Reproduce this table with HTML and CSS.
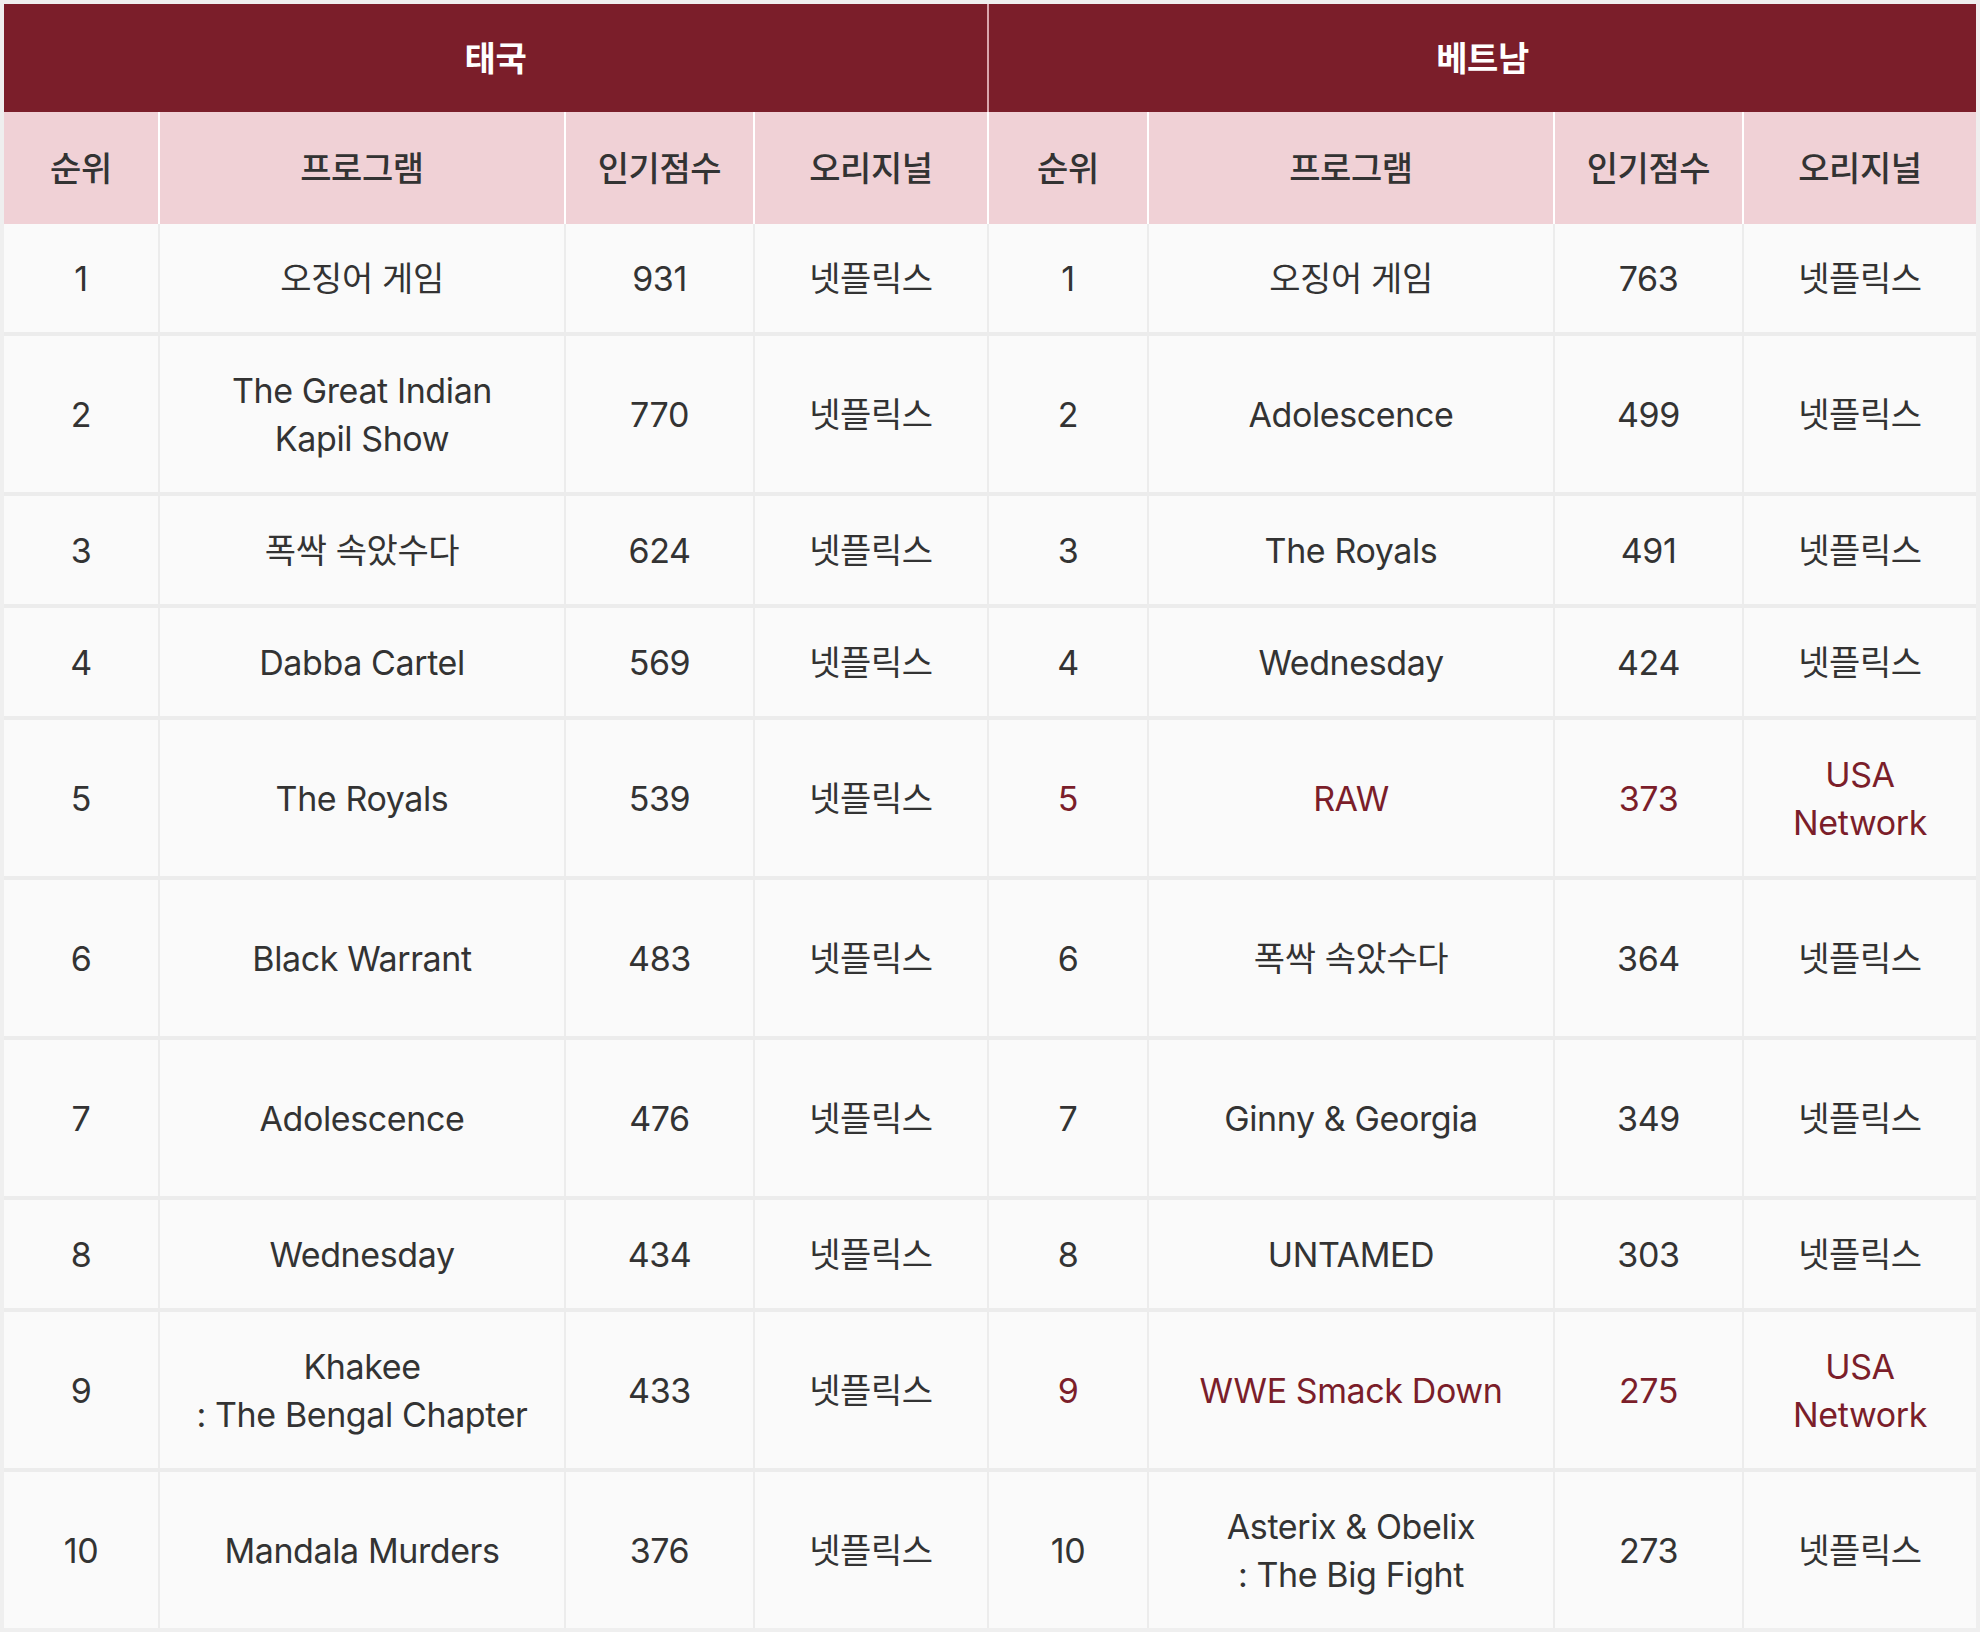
FILE: index.html
```html
<!DOCTYPE html>
<html lang="ko">
<head>
<meta charset="utf-8">
<title>태국 · 베트남 인기 프로그램 순위</title>
<link rel="stylesheet" href="styles.css">
</head>
<body>
<div class="rank-table">
  <div class="cell country">태국</div>
  <div class="cell country last">베트남</div>

  <div class="cell sub">순위</div>
  <div class="cell sub">프로그램</div>
  <div class="cell sub">인기점수</div>
  <div class="cell sub">오리지널</div>
  <div class="cell sub">순위</div>
  <div class="cell sub">프로그램</div>
  <div class="cell sub">인기점수</div>
  <div class="cell sub last">오리지널</div>

  <div class="cell">1</div><div class="cell">오징어 게임</div><div class="cell">931</div><div class="cell">넷플릭스</div>
  <div class="cell">1</div><div class="cell">오징어 게임</div><div class="cell">763</div><div class="cell last">넷플릭스</div>

  <div class="cell tall">2</div><div class="cell tall">The Great Indian<br>Kapil Show</div><div class="cell tall">770</div><div class="cell tall">넷플릭스</div>
  <div class="cell tall">2</div><div class="cell tall">Adolescence</div><div class="cell tall">499</div><div class="cell tall last">넷플릭스</div>

  <div class="cell">3</div><div class="cell">폭싹 속았수다</div><div class="cell">624</div><div class="cell">넷플릭스</div>
  <div class="cell">3</div><div class="cell">The Royals</div><div class="cell">491</div><div class="cell last">넷플릭스</div>

  <div class="cell">4</div><div class="cell">Dabba Cartel</div><div class="cell">569</div><div class="cell">넷플릭스</div>
  <div class="cell">4</div><div class="cell">Wednesday</div><div class="cell">424</div><div class="cell last">넷플릭스</div>

  <div class="cell tall">5</div><div class="cell tall">The Royals</div><div class="cell tall">539</div><div class="cell tall">넷플릭스</div>
  <div class="cell tall hl">5</div><div class="cell tall hl">RAW</div><div class="cell tall hl">373</div><div class="cell tall hl last">USA<br>Network</div>

  <div class="cell tall">6</div><div class="cell tall">Black Warrant</div><div class="cell tall">483</div><div class="cell tall">넷플릭스</div>
  <div class="cell tall">6</div><div class="cell tall">폭싹 속았수다</div><div class="cell tall">364</div><div class="cell tall last">넷플릭스</div>

  <div class="cell tall">7</div><div class="cell tall">Adolescence</div><div class="cell tall">476</div><div class="cell tall">넷플릭스</div>
  <div class="cell tall">7</div><div class="cell tall">Ginny &amp; Georgia</div><div class="cell tall">349</div><div class="cell tall last">넷플릭스</div>

  <div class="cell">8</div><div class="cell">Wednesday</div><div class="cell">434</div><div class="cell">넷플릭스</div>
  <div class="cell">8</div><div class="cell">UNTAMED</div><div class="cell">303</div><div class="cell last">넷플릭스</div>

  <div class="cell tall">9</div><div class="cell tall">Khakee<br>: The Bengal Chapter</div><div class="cell tall">433</div><div class="cell tall">넷플릭스</div>
  <div class="cell tall hl">9</div><div class="cell tall hl">WWE Smack Down</div><div class="cell tall hl">275</div><div class="cell tall hl last">USA<br>Network</div>

  <div class="cell tall end">10</div><div class="cell tall end">Mandala Murders</div><div class="cell tall end">376</div><div class="cell tall end">넷플릭스</div>
  <div class="cell tall end">10</div><div class="cell tall end">Asterix &amp; Obelix<br>: The Big Fight</div><div class="cell tall end">273</div><div class="cell tall end last">넷플릭스</div>
</div>
</body>
</html>
```

FILE: styles.css
```css
html, body {
  margin: 0;
  padding: 0;
}

body {
  background: #efefef;
  padding: 4px;
  font-family: Inter, "Noto Sans CJK KR", "Noto Sans", sans-serif;
  color: #333333;
}

.rank-table {
  display: grid;
  grid-template-columns: 156px 406px 189px 234px 160px 406px 189px 232px;
  width: 1972px;
}

.cell {
  box-sizing: border-box;
  display: flex;
  align-items: center;
  justify-content: center;
  text-align: center;
  background: #fafafa;
  border-right: 2px solid #ececec;
  border-bottom: 4px solid #ececec;
  height: 112px;
  padding-top: 2px;
  font-size: 34px;
  line-height: 48px;
  font-weight: 400;
  letter-spacing: -0.4px;
}

.cell.tall {
  height: 160px;
}

.cell.end {
  height: 156px;
  border-bottom: 0;
}

.cell.last {
  border-right: 0;
}

.cell.hl {
  color: #7b1e2a;
}

.country {
  grid-column: span 4;
  height: 108px;
  background: #7b1e2a;
  color: #ffffff;
  font-weight: 700;
  border-bottom: 0;
  border-right: 2px solid #d9a5ac;
}

.sub {
  height: 112px;
  background: #f0d1d6;
  font-weight: 500;
  border-bottom: 0;
  border-right: 2px solid #ffffff;
}
```
